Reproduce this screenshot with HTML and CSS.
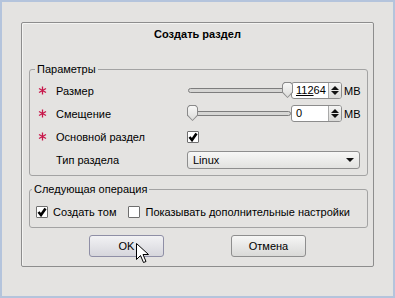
FILE: index.html
```html
<!DOCTYPE html>
<html lang="ru">
<head>
    <meta charset="UTF-8">
    <title>Создать раздел</title>
    <link rel="stylesheet" href="styles.css">
</head>
<body>
    <div class="window">
        <div class="dialog">
            <div class="title">Создать раздел</div>

            <fieldset class="group params">
                <legend>Параметры</legend>

                <span class="req"><svg width="9" height="9" viewBox="0 0 9 9"><path d="M4.5 0.5V8.5M1 2.5L8 6.5M8 2.5L1 6.5"/></svg></span>
                <span class="label">Размер</span>
                <div class="control">
                    <div class="slider"><div class="track"></div><div class="handle" style="left: 95px"></div></div>
                    <div class="spin"><div class="field"><u>112</u>64</div><div class="arrows"><i class="up"></i><i class="down"></i></div></div>
                    <span class="unit">MB</span>
                </div>

                <span class="req"><svg width="9" height="9" viewBox="0 0 9 9"><path d="M4.5 0.5V8.5M1 2.5L8 6.5M8 2.5L1 6.5"/></svg></span>
                <span class="label">Смещение</span>
                <div class="control">
                    <div class="slider"><div class="track"></div><div class="handle" style="left: 0px"></div></div>
                    <div class="spin"><div class="field">0</div><div class="arrows"><i class="up"></i><i class="down"></i></div></div>
                    <span class="unit">MB</span>
                </div>

                <span class="req"><svg width="9" height="9" viewBox="0 0 9 9"><path d="M4.5 0.5V8.5M1 2.5L8 6.5M8 2.5L1 6.5"/></svg></span>
                <span class="label">Основной раздел</span>
                <div class="control">
                    <span class="check on"><svg width="10" height="10" viewBox="0 0 10 10"><path d="M1.5 5L4 8L8.5 1.5"/></svg></span>
                </div>

                <span class="req"></span>
                <span class="label">Тип раздела</span>
                <div class="control">
                    <div class="combo"><span>Linux</span><i class="down"></i></div>
                </div>
            </fieldset>

            <fieldset class="group next">
                <legend>Следующая операция</legend>
                <label class="opt"><span class="check on"><svg width="10" height="10" viewBox="0 0 10 10"><path d="M1.5 5L4 8L8.5 1.5"/></svg></span>Создать том</label>
                <label class="opt"><span class="check"></span>Показывать дополнительные настройки</label>
            </fieldset>

            <div class="buttons">
                <button class="btn default">OK</button>
                <button class="btn">Отмена</button>
            </div>
        </div>

        <svg class="cursor" width="13" height="21" viewBox="0 0 13 21">
            <path d="M0.5 0.5V16.5L4.5 12.5L7.5 19.5L10 18.5L7 11.5H12.5Z" fill="#fff" stroke="#000" stroke-width="1"/>
        </svg>
    </div>
</body>
</html>
```

FILE: styles.css
```css
html, body {
    margin: 0;
    padding: 0;
}
body {
    font-family: "Liberation Sans", Arial, sans-serif;
    font-size: 11px;
    color: #000;
    background: #e4e3e1;
}
.window {
    position: relative;
    box-sizing: border-box;
    width: 395px;
    height: 298px;
    border: 2px solid #b4c4dc;
    background: #e4e3e1;
    padding: 20px 0 0 19px;
}
.dialog {
    box-sizing: border-box;
    width: 353px;
    height: 245px;
    border: 1px solid #8d8d8d;
    border-radius: 2px;
    box-shadow: inset 1px 1px 0 #f4f4f2;
}
.title {
    padding-top: 4px;
    height: 14px;
    line-height: 14px;
    text-align: center;
    font-weight: bold;
    font-size: 11px;
}
.group {
    box-sizing: border-box;
    width: 339px;
    margin: 0 0 0 7px;
    border: 1px solid #a3a3a3;
    border-radius: 3px;
    min-width: 0;
}
.group legend {
    padding: 0 2px;
    margin-left: -3px;
    line-height: 14px;
    font-size: 11px;
}
.params {
    margin-top: 21px;
    padding: 3px 6px 4px 8px;
    display: grid;
    grid-template-columns: 18px 131px 1fr;
    grid-auto-rows: 23px;
    align-items: center;
}
.req {
    display: flex;
    align-items: center;
}
.req svg path {
    stroke: #c8174a;
    stroke-width: 1.3;
    fill: none;
}
.label {
    white-space: nowrap;
}
.control {
    display: flex;
    align-items: center;
}
.slider {
    position: relative;
    width: 104px;
    height: 17px;
}
.track {
    position: absolute;
    left: 1px;
    right: 0;
    top: 6px;
    height: 3px;
    border: 1px solid #7d7d7d;
    border-radius: 3px;
    background: #d6d6d4;
}
.handle {
    position: absolute;
    top: 0;
    width: 11px;
    height: 16px;
}
.handle::before {
    content: "";
    position: absolute;
    left: 0;
    top: 0;
    width: 11px;
    height: 16px;
    background: #8a8a8a;
    clip-path: polygon(20% 0, 80% 0, 100% 15%, 100% 65%, 50% 100%, 0 65%, 0 15%);
}
.handle::after {
    content: "";
    position: absolute;
    left: 1px;
    top: 1px;
    width: 9px;
    height: 14px;
    background: linear-gradient(#f8f8f7, #dcdcda);
    clip-path: polygon(20% 0, 80% 0, 100% 12%, 100% 64%, 50% 100%, 0 64%, 0 12%);
}
.spin {
    display: flex;
    box-sizing: border-box;
    width: 51px;
    height: 17px;
    border: 1px solid #8c8c8c;
    border-radius: 3px;
    background: #fff;
    overflow: hidden;
}
.spin .field {
    flex: 1;
    padding-left: 4px;
    line-height: 15px;
}
.spin .field u {
    text-decoration-thickness: 1px;
}
.arrows {
    width: 13px;
    border-left: 1px solid #a9a9a9;
    background: linear-gradient(#f4f4f3, #d9d9d7);
    display: flex;
    flex-direction: column;
    align-items: center;
    justify-content: space-around;
    padding: 2px 0;
    box-sizing: border-box;
}
.arrows i, .combo i {
    display: block;
    width: 0;
    height: 0;
    border-left: 4px solid transparent;
    border-right: 4px solid transparent;
}
.arrows .up {
    border-bottom: 4px solid #111;
}
.arrows .down, .combo .down {
    border-top: 4px solid #111;
}
.unit {
    margin-left: 2px;
}
.check {
    display: inline-flex;
    align-items: center;
    justify-content: center;
    box-sizing: border-box;
    width: 12px;
    height: 12px;
    border: 1px solid #6e6e6e;
    border-radius: 1px;
    background: #fff;
}
.check svg path {
    fill: none;
    stroke: #000;
    stroke-width: 2.6;
}
.combo {
    box-sizing: border-box;
    width: 173px;
    height: 18px;
    border: 1px solid #8e8e8e;
    border-radius: 3px;
    background: linear-gradient(#f7f7f6, #e2e2e0);
    display: flex;
    align-items: center;
    justify-content: space-between;
    padding: 0 5px 0 5px;
}
.next {
    margin-top: 6px;
    padding: 4px 6px 4px 5px;
    display: flex;
    align-items: center;
    height: 46px;
}
.opt {
    display: flex;
    align-items: center;
    gap: 5px;
    height: 22px;
    margin-right: 11px;
    white-space: nowrap;
}
.opt .check {
    margin-left: 1px;
}
.buttons {
    display: flex;
    justify-content: center;
    gap: 67px;
    margin-top: 7px;
}
.btn {
    box-sizing: border-box;
    width: 75px;
    height: 22px;
    border: 1px solid #8e8e8e;
    border-radius: 3px;
    background: linear-gradient(#f6f6f5, #d9d9d7);
    font-family: "Liberation Sans", Arial, sans-serif;
    font-size: 11px;
    color: #000;
    padding: 0;
}
.btn.default {
    border-color: #8f8fa6;
    background: linear-gradient(#f2f2f4, #d6d6dc);
}
.cursor {
    position: absolute;
    left: 134px;
    top: 241px;
}
```
